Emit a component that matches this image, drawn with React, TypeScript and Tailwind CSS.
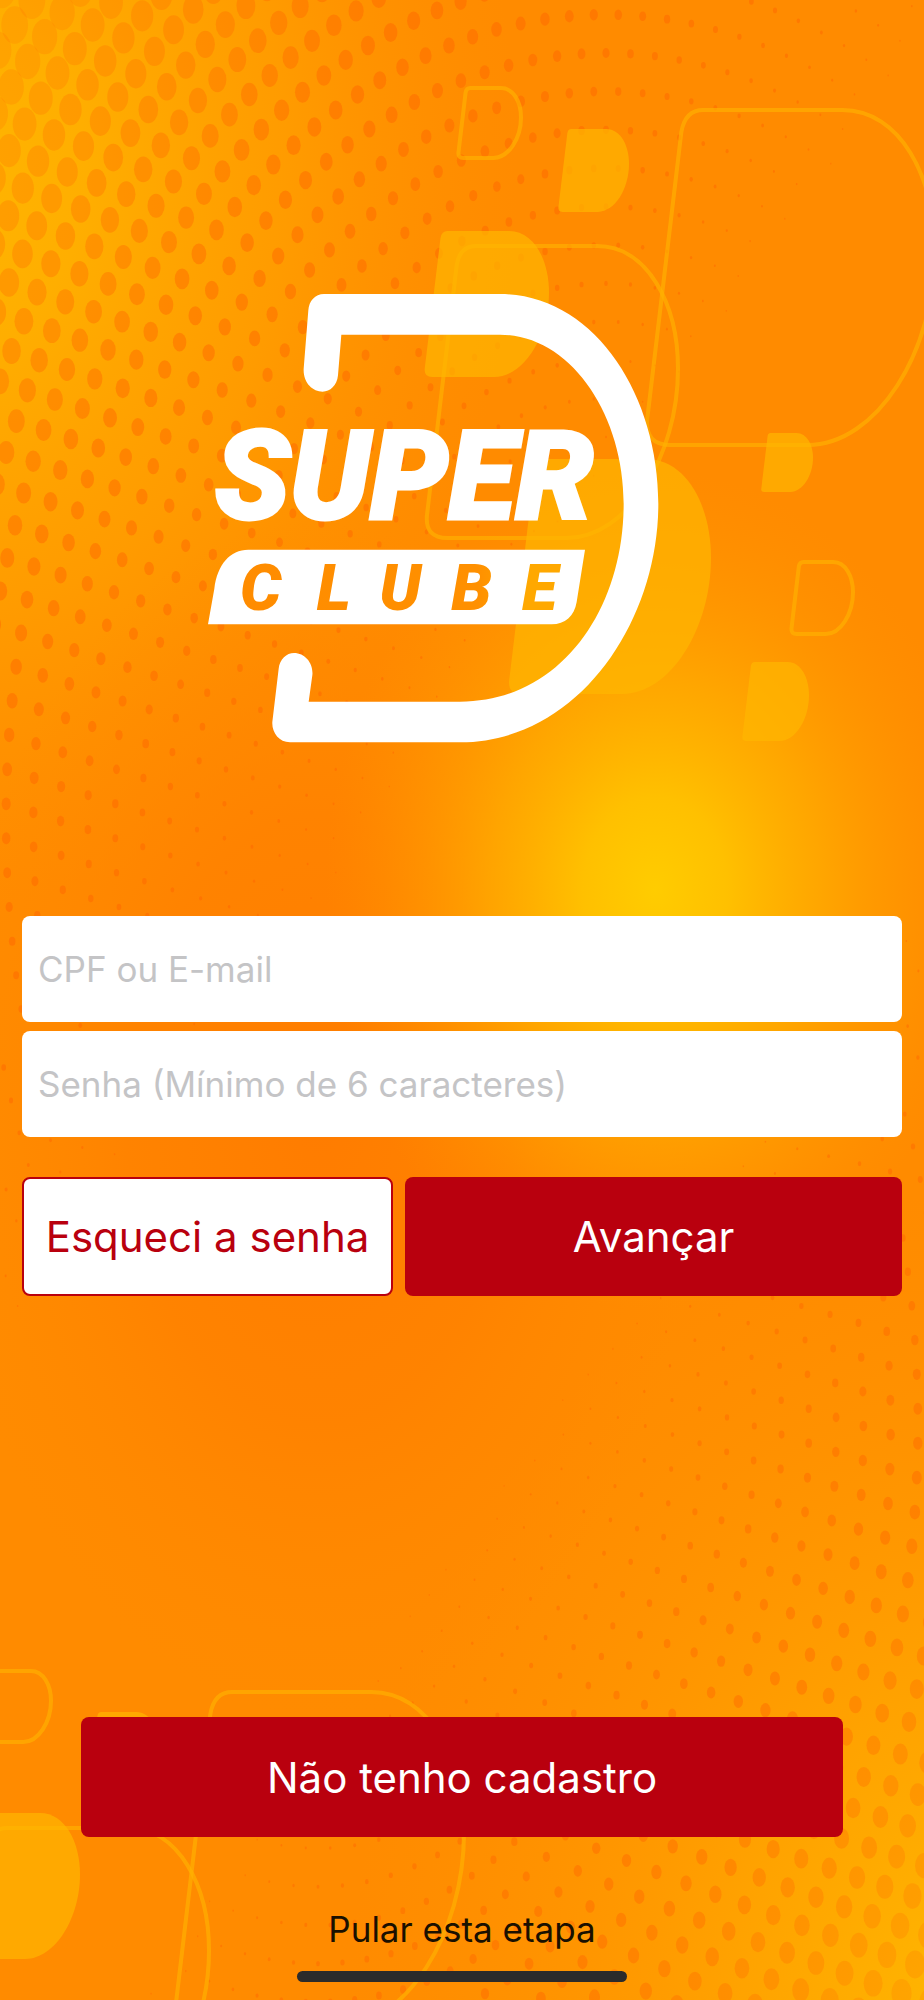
import React from 'react';

interface Dot {
  x: number;
  y: number;
  r: number;
  opacity: number;
}

interface DShape {
  x: number;
  y: number;
  w: number;
  h: number;
  filled?: boolean;
}

const RING_X = 27.27;
const RING_Y = 38.4;
const SECTORS = 7;

// Halftone dots on concentric rings, every ring holds 7 dots more than the last one
const ringDots = (
  cx: number,
  cy: number,
  direction: 1 | -1,
  sizeAt: (x: number, y: number) => number,
  opacityAt: (x: number, y: number) => number
): Dot[] => {
  const dots: Dot[] = [];
  for (let n = 4; n < 46; n++) {
    const total = SECTORS * n;
    for (let k = 0; k < total; k++) {
      const angle = ((k - n / 2) / total) * Math.PI * 2;
      const x = cx - direction * Math.sin(angle) * RING_X * n;
      const y = cy - direction * Math.cos(angle) * RING_Y * n;
      if (x < -20 || x > 944 || y < -20 || y > 2020) continue;
      const r = sizeAt(x, y) / 2;
      if (r < 0.6) continue;
      dots.push({ x, y, r, opacity: opacityAt(x, y) });
    }
  }
  return dots;
};

const topDistance = (x: number, y: number) => x + y * 0.7;
const bottomDistance = (x: number, y: number) => 924 - x + (2000 - y) * 0.7;

const topDots = ringDots(
  606,
  821,
  1,
  (x, y) => 28 * Math.pow(Math.max(0, 1 - topDistance(x, y) / 1080), 1.5),
  (x, y) => Math.min(0.46, 0.14 + Math.max(0, topDistance(x, y)) / 1300)
);

const bottomDots = ringDots(
  318,
  1426,
  -1,
  (x, y) => 21 * Math.pow(Math.max(0, 1 - bottomDistance(x, y) / 900), 1.4),
  (x, y) => Math.min(0.42, 0.16 + Math.max(0, bottomDistance(x, y)) / 1400)
);

const shapes: DShape[] = [
  { x: 458, y: 88, w: 63, h: 70 },
  { x: 558, y: 129, w: 71, h: 83, filled: true },
  { x: 425, y: 246, w: 253, h: 292 },
  { x: 424, y: 231, w: 125, h: 146, filled: true },
  { x: 645, y: 110, w: 290, h: 335 },
  { x: 761, y: 433, w: 52, h: 59, filled: true },
  { x: 508, y: 459, w: 203, h: 235, filled: true },
  { x: 791, y: 562, w: 62, h: 72 },
  { x: 742, y: 662, w: 67, h: 79, filled: true },
  { x: -12, y: 1671, w: 63, h: 71 },
  { x: 88, y: 1712, w: 71, h: 83, filled: true },
  { x: 174, y: 1692, w: 290, h: 335 },
  { x: -44, y: 1828, w: 253, h: 292 },
  { x: -45, y: 1813, w: 125, h: 146, filled: true },
];

const dPath = ({ x, y, w, h, filled }: DShape) => {
  const slant = h * 0.125;
  const r = filled ? h * 0.04 : h * 0.055;
  const right = x + w;
  return [
    `M${x + slant + r * 0.9} ${y}`,
    `H${right - w * 0.32}`,
    `C${right - w * 0.12} ${y} ${right} ${y + h * 0.2} ${right} ${y + h * 0.42}`,
    `C${right} ${y + h * 0.72} ${right - w * 0.2} ${y + h} ${right - w * 0.44} ${y + h}`,
    `H${x + r * 1.4}`,
    `Q${x} ${y + h} ${x + r * 0.12} ${y + h - r * 1.4}`,
    `L${x + slant - r * 0.3} ${y + r * 1.2}`,
    `Q${x + slant - r * 0.1} ${y} ${x + slant + r * 0.9} ${y}Z`,
  ].join('');
};

const Background: React.FC = () => (
  <svg
    className="absolute inset-0 h-full w-full"
    viewBox="0 0 924 2000"
    preserveAspectRatio="xMidYMid slice"
    aria-hidden="true"
  >
    <defs>
      <radialGradient id="corner-top" gradientUnits="userSpaceOnUse" cx="0" cy="0" r="1" gradientTransform="translate(-60 170) scale(580 740)">
        <stop offset="0" stopColor="#ffb600" />
        <stop offset="0.25" stopColor="#ffb000" stopOpacity="0.95" />
        <stop offset="0.6" stopColor="#ffa600" stopOpacity="0.6" />
        <stop offset="1" stopColor="#ff9600" stopOpacity="0" />
      </radialGradient>
      <radialGradient id="corner-bottom" gradientUnits="userSpaceOnUse" cx="0" cy="0" r="1" gradientTransform="translate(990 2010) scale(640 820)">
        <stop offset="0" stopColor="#ffba00" />
        <stop offset="0.4" stopColor="#ffa800" stopOpacity="0.8" />
        <stop offset="1" stopColor="#ff9600" stopOpacity="0" />
      </radialGradient>
      <radialGradient id="shade" gradientUnits="userSpaceOnUse" cx="0" cy="0" r="1" gradientTransform="translate(320 1120) scale(380 600)">
        <stop offset="0" stopColor="#ff7c00" />
        <stop offset="0.5" stopColor="#ff8000" stopOpacity="0.75" />
        <stop offset="1" stopColor="#ff8800" stopOpacity="0" />
      </radialGradient>
      <radialGradient id="glow" gradientUnits="userSpaceOnUse" cx="0" cy="0" r="1" gradientTransform="translate(655 890) scale(330 420)">
        <stop offset="0" stopColor="#ffcc00" />
        <stop offset="0.22" stopColor="#ffc600" stopOpacity="0.9" />
        <stop offset="0.5" stopColor="#ffb800" stopOpacity="0.6" />
        <stop offset="0.75" stopColor="#ffa800" stopOpacity="0.3" />
        <stop offset="1" stopColor="#ff9800" stopOpacity="0" />
      </radialGradient>
    </defs>
    <rect width="924" height="2000" fill="#ff8b00" />
    <rect width="924" height="2000" fill="url(#corner-top)" />
    <rect width="924" height="2000" fill="url(#corner-bottom)" />
    <rect width="924" height="2000" fill="url(#shade)" />
    <rect width="924" height="2000" fill="url(#glow)" />
    {[...topDots, ...bottomDots].map((dot, index) => (
      <ellipse key={index} cx={dot.x} cy={dot.y} rx={dot.r} ry={dot.r * 1.4} fill="#ff6400" fillOpacity={dot.opacity} />
    ))}
    {shapes.map((shape, index) => (
      <path
        key={index}
        d={dPath(shape)}
        fill={shape.filled ? '#ffb700' : 'none'}
        fillOpacity={0.7}
        stroke={shape.filled ? 'none' : '#ffb200'}
        strokeOpacity={0.65}
        strokeWidth={4}
      />
    ))}
  </svg>
);

const Logo: React.FC = () => (
  <svg className="mx-auto w-[508px] max-w-full" viewBox="84 98 1524 1350" role="img" aria-label="Super Clube">
    <defs>
      <linearGradient id="clube" gradientUnits="userSpaceOnUse" x1="188" y1="0" x2="1128" y2="0">
        <stop offset="0" stopColor="#ff8c00" />
        <stop offset="0.75" stopColor="#ff9000" />
        <stop offset="0.9" stopColor="#ffa800" />
      </linearGradient>
    </defs>
    <path
      fill="#fff"
      d="M385 150C387 122 405 101 432 101H960C1240 101 1435 400 1435 730C1435 1090 1190 1446 840 1446H330C296 1446 275 1416 277 1385L296 1225C299 1196 320 1178 342 1178C376 1178 401 1210 397 1245L386 1324H840C1140 1324 1331 1050 1331 730C1331 460 1170 223 960 223H484L474 345C471 376 450 394 428 394C398 394 369 368 371 325Z"
    />
    <path
      fill="#fff"
      d="M84 1092L103 985C112 912 150 868 205 868H1215L1190 1025C1183 1068 1155 1092 1115 1092Z"
    />
    <text
      x="104"
      y="776"
      fill="#fff"
      stroke="#fff"
      strokeWidth="9"
      fontSize="372"
      className="font-['Roboto',sans-serif] font-black italic"
    >
      SUPER
    </text>
    <text
      x="180 410 598 814 1026"
      y="1050"
      fill="url(#clube)"
      fontSize="195"
      className="font-['Roboto',sans-serif] font-black italic"
    >
      CLUBE
    </text>
  </svg>
);

const App: React.FC = () => {
  return (
    <main className="relative flex min-h-screen flex-col overflow-hidden bg-[#ff8b00] font-['Inter',sans-serif]">
      <Background />

      <div className="relative flex grow flex-col pt-[293px]">
        <Logo />

        <form className="mt-[173px] px-[22px]" onSubmit={(e) => e.preventDefault()}>
          <div className="flex flex-col gap-[9px]">
            <input
              type="text"
              aria-label="CPF ou E-mail"
              placeholder="CPF ou E-mail"
              className="h-[106px] w-full rounded-lg bg-white px-4 text-[35px] text-black placeholder:text-[#c4c4c6]"
            />
            <input
              type="password"
              aria-label="Senha (Mínimo de 6 caracteres)"
              placeholder="Senha (Mínimo de 6 caracteres)"
              className="h-[106px] w-full rounded-lg bg-white px-4 text-[35px] text-black placeholder:text-[#c4c4c6]"
            />
          </div>

          <div className="mt-10 flex gap-3">
            <button
              type="button"
              className="h-[119px] w-[371px] shrink-0 rounded-lg border-2 border-[#b9000e] bg-white text-[42px] whitespace-nowrap text-[#b9000e]"
            >
              Esqueci a senha
            </button>
            <button type="submit" className="h-[119px] grow rounded-lg bg-[#b9000e] text-[42px] text-white">
              Avançar
            </button>
          </div>
        </form>

        <div className="mt-auto flex flex-col items-center px-[81px] pb-[18px]">
          <button type="button" className="h-[120px] w-full rounded-lg bg-[#b9000e] text-[42px] text-white">
            Não tenho cadastro
          </button>
          <a href="#pular" className="mt-[68px] text-[35px] leading-[48px] text-[#1a1000]">
            Pular esta etapa
          </a>
          <div className="mt-[18px] h-[11px] w-[330px] rounded-full bg-[#2b2b2b]" />
        </div>
      </div>
    </main>
  );
};

export default App;
